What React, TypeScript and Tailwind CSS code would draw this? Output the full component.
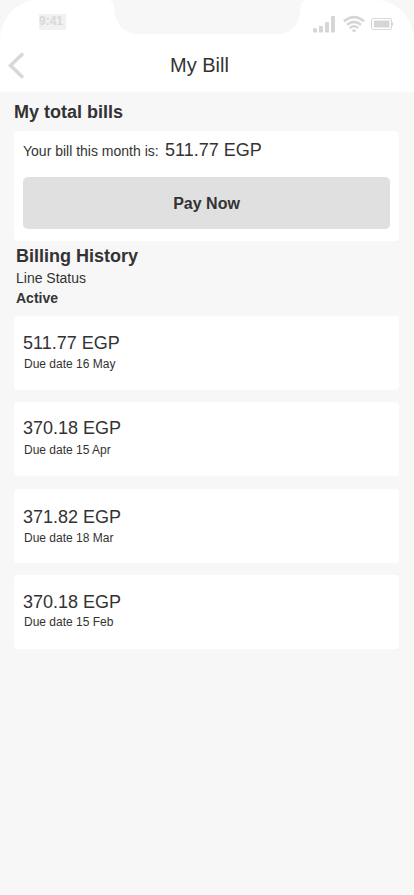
type Bill = { amount: string; due: string; card: string; gap: string };

const history: Bill[] = [
  { amount: '511.77 EGP', due: 'Due date 16 May', card: 'mt-2 pt-[17px]', gap: 'mt-[3px]' },
  { amount: '370.18 EGP', due: 'Due date 15 Apr', card: 'mt-3 pt-4', gap: 'mt-[4px]' },
  { amount: '371.82 EGP', due: 'Due date 18 Mar', card: 'mt-[13px] pt-[18px]', gap: 'mt-[3px]' },
  { amount: '370.18 EGP', due: 'Due date 15 Feb', card: 'mt-3 pt-[17px]', gap: 'mt-[2px]' },
];

function StatusIcons() {
  return (
    <svg className="mt-[14px] h-5 w-[82px]" viewBox="312 14 82 20" fill="none">
      <g fill="#d6d6d6">
        <rect x="313" y="28.300" width="4" height="4.200" rx="0.7" />
        <rect x="319" y="26" width="4" height="6.5" rx="0.7" />
        <rect x="325" y="22" width="4" height="10.5" rx="0.7" />
        <rect x="331" y="16" width="4" height="16.5" rx="0.7" />
        <path d="M351.4 30.2 Q354 28.6 356.6 30.200 L354 32.600 Z" />
        <rect x="373.8" y="20.5" width="15.7" height="7" rx="0.5" />
        <path d="M392.2 21.5 Q394.6 24 392.2 26.5 Z" />
      </g>
      <g stroke="#d6d6d6" strokeWidth="2.5">
        <path d="M343.900 21.4 Q354 12.800 364.100 21.4" />
        <path d="M347 24.8 Q354 19 361 24.8" />
        <path d="M349.8 27.9 Q354 24.7 358.2 27.9" />
      </g>
      <rect x="371.5" y="18.5" width="20" height="11" rx="1.5" stroke="#d9d9d9" />
    </svg>
  );
}

function Header() {
  return (
    <header className="relative h-[92px]">
      <svg className="absolute inset-0 h-[92px] w-[414px]" viewBox="0 0 414 92">
        <path
          fill="#fff"
          d="M0 92 V42 C0 18 17 0 38 0 H109 C112 1 114 3 114.5 8 C115 24 123 34 139 34 H277 C292 34 300 24 300.500 8 C301 3 303 1 307 0 H376 C397 0 414 18 414 42 V92 Z"
        />
      </svg>
      <div className="relative flex h-[46px] items-start justify-between pr-5 pl-[39px]">
        <span className="mt-[14px] h-4 w-[27px] bg-[#f1f1f1] text-[12px] leading-[14px] font-bold text-[#d9d9d9]">
          9:41
        </span>
        <StatusIcons />
      </div>
      <div className="relative flex h-[46px] pl-2">
        <svg className="mt-[5px] h-7 w-[17px]" viewBox="0 0 17 28" fill="none">
          <path d="M15 2.500 L2.500 14.500 L15 26.500" stroke="#d8d8d8" strokeWidth="3.600" />
        </svg>
        <h1 className="mt-[7px] ml-[145px] text-[20px] leading-6">My Bill</h1>
      </div>
    </header>
  );
}

export default function App() {
  return (
    <div className="h-[895px] w-[414px] overflow-hidden bg-[#f7f7f7] font-['Liberation_Sans',Arial,sans-serif] text-[#333]">
      <Header />
      <main className="pr-[15px] pl-[14px]">
        <h2 className="pt-[10px] text-[18px] leading-5 font-bold">My total bills</h2>
        <section className="mt-[9px] h-[110px] rounded bg-white px-[9px] pt-[9px]">
          <div className="flex h-[37px] items-start">
            <span className="mt-[1px] w-[142px] text-sm leading-5">Your bill this month is:</span>
            <span className="text-[18px] leading-5">511.77 EGP</span>
          </div>
          <button className="h-[52px] w-full rounded-[5px] bg-[#e0e0e0] pt-[2px] text-base font-bold">Pay Now</button>
        </section>
        <div className="pl-[2px]">
          <h2 className="pt-[5px] text-[18px] leading-5 font-bold">Billing History</h2>
          <p className="mt-[2px] text-sm leading-5">Line Status</p>
          <p className="text-sm leading-5 font-bold">Active</p>
        </div>
        {history.map((bill) => (
          <section key={bill.due} className={`h-[74px] rounded bg-white pl-[9px] ${bill.card}`}>
            <p className="text-[18px] leading-5">{bill.amount}</p>
            <p className={`pl-[1px] text-xs leading-4 ${bill.gap}`}>{bill.due}</p>
          </section>
        ))}
      </main>
    </div>
  );
}
